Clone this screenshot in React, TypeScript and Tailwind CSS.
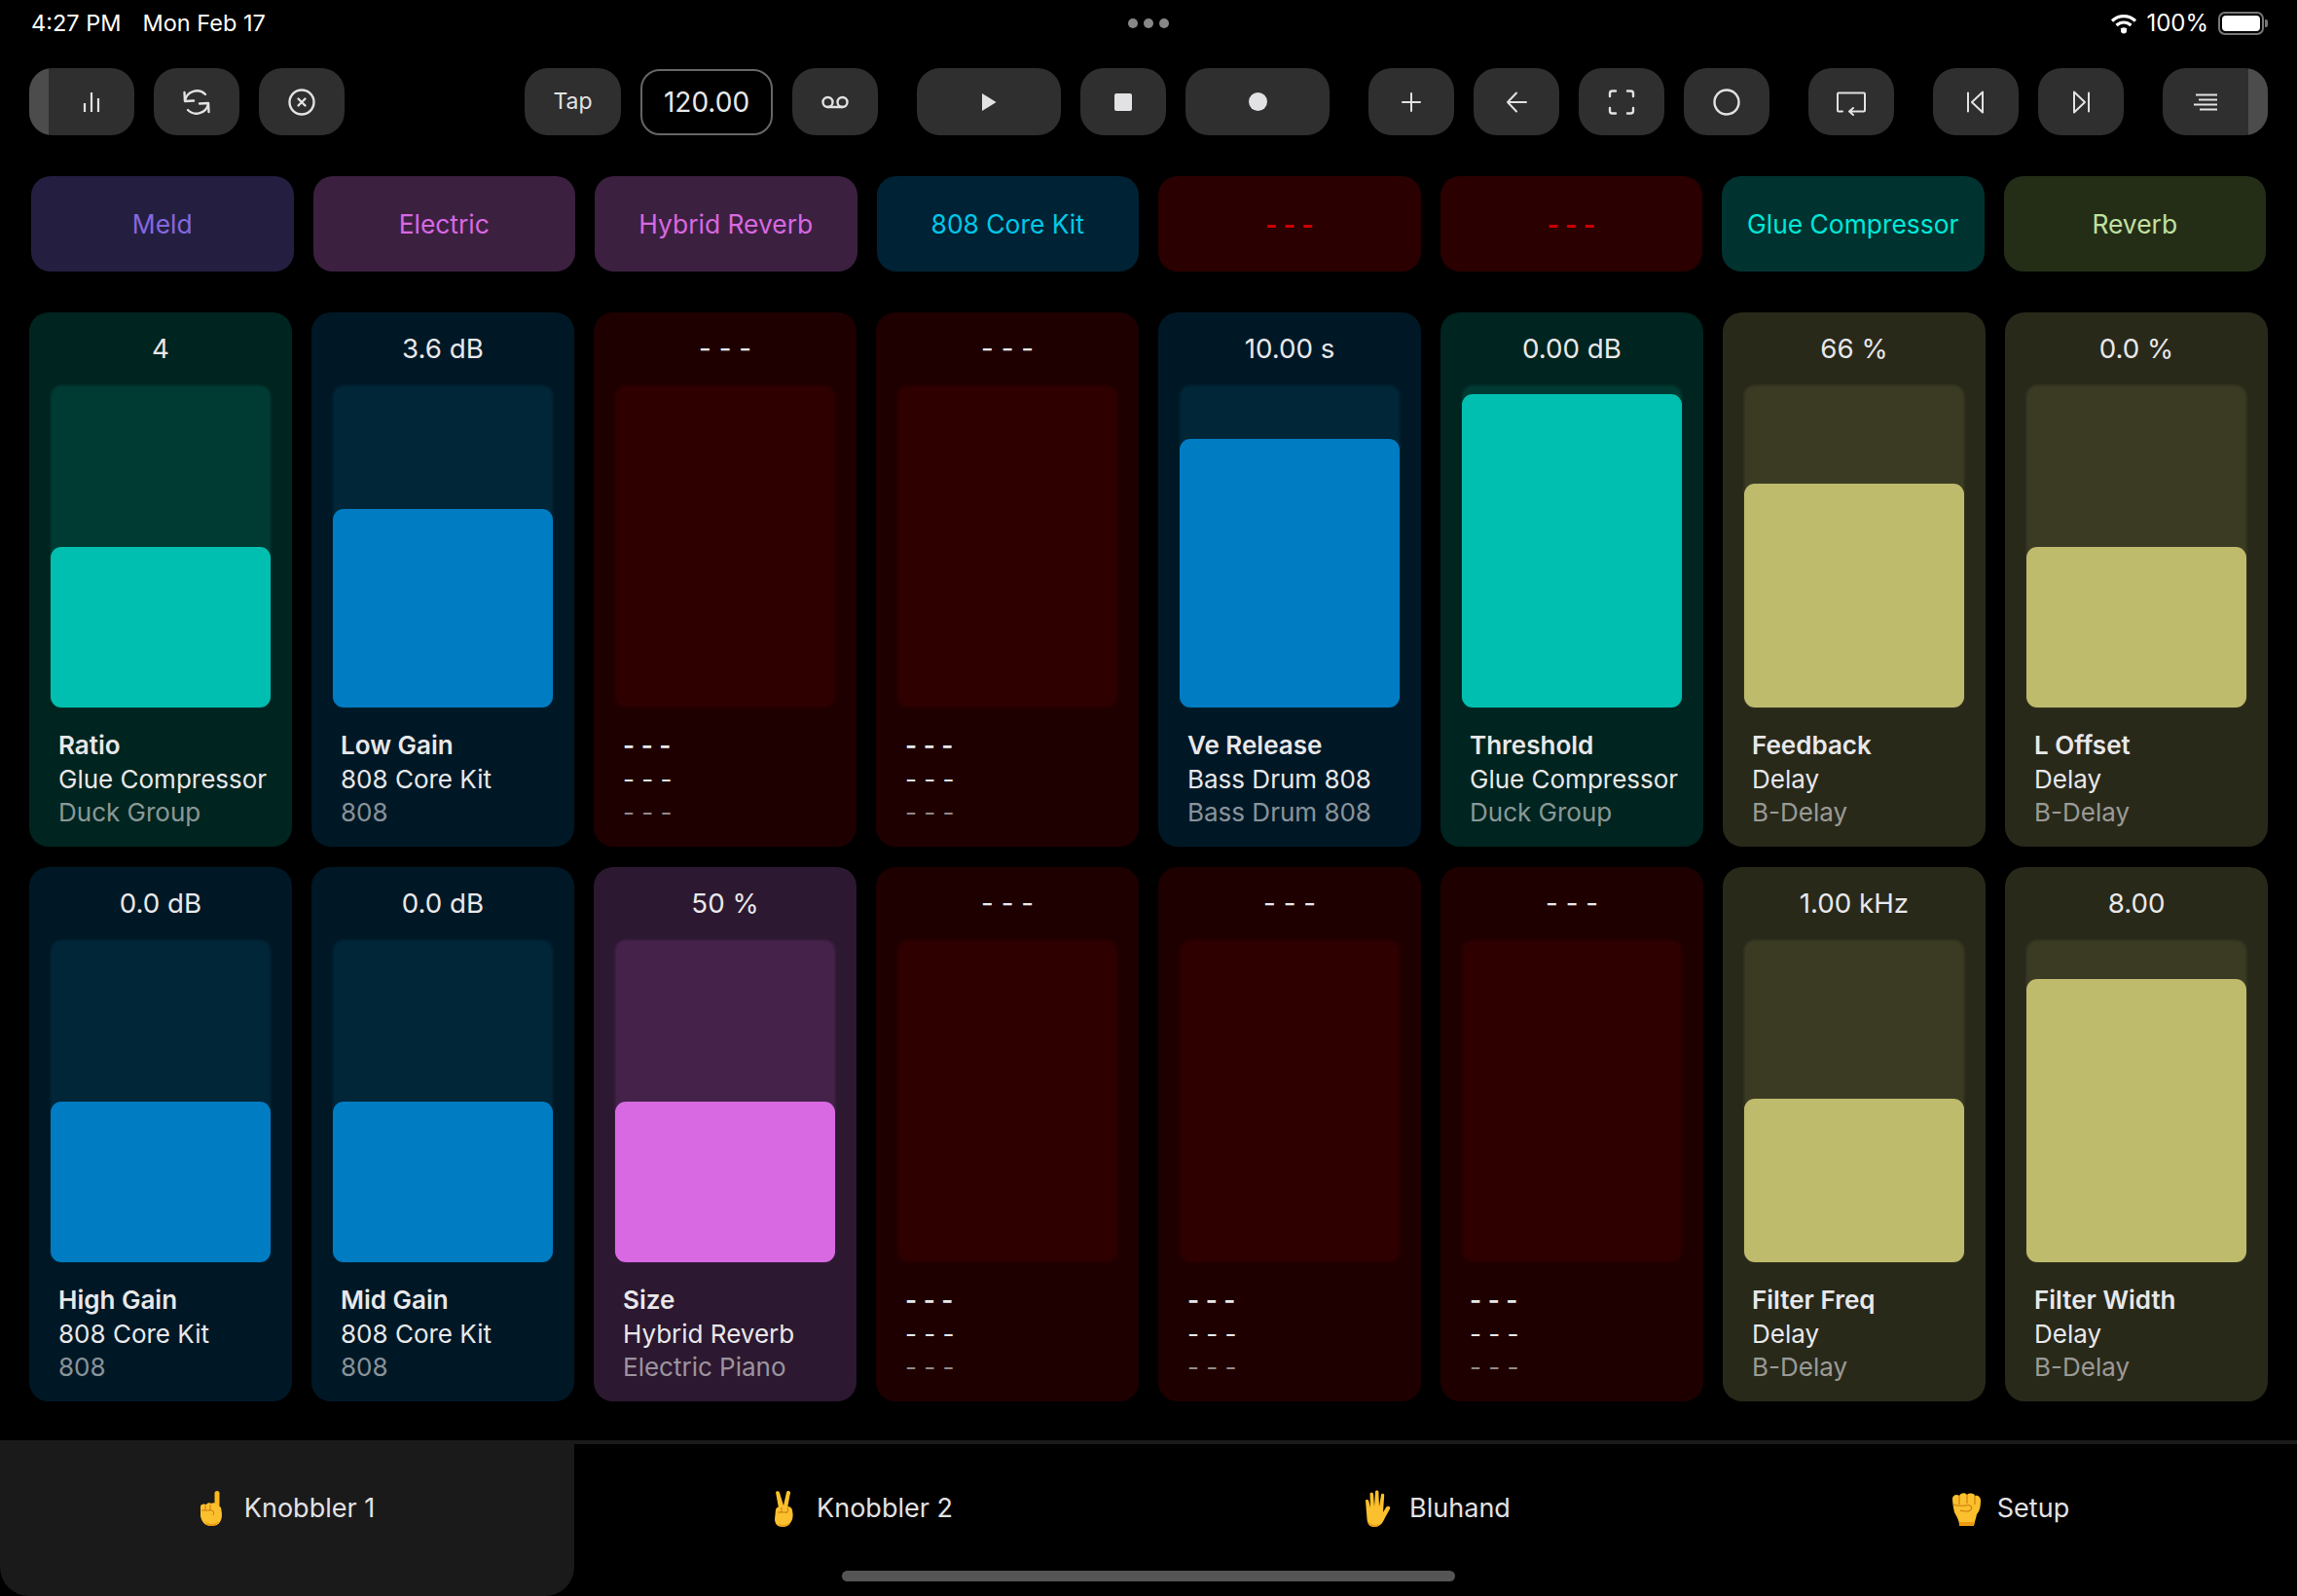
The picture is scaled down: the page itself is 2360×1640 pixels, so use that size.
import React from "react";

const THEMES = {
  green: { card: "bg-[#00241f]", track: "bg-[#003b33] border-[#002f29]", fill: "bg-[#00bfb0]" },
  blue: { card: "bg-[#001826]", track: "bg-[#002638] border-[#001f2f]", fill: "bg-[#007cc2]" },
  red: { card: "bg-[#1f0000]", track: "bg-[#2e0000] border-[#260000]", fill: "" },
  purple: { card: "bg-[#2c1830]", track: "bg-[#44224a] border-[#3a1e40]", fill: "bg-[#d869e2]" },
  yellow: { card: "bg-[#29291a]", track: "bg-[#3b3b24] border-[#323220]", fill: "bg-[#bfbb6d]" },
};

type Theme = keyof typeof THEMES;
type Param = { value: string; name: string; device: string; track: string; theme: Theme; fill: number };

const EMPTY: Param = { value: "- - -", name: "- - -", device: "- - -", track: "- - -", theme: "red", fill: 0 };

const ROW1: Param[] = [
  { value: "4", name: "Ratio", device: "Glue Compressor", track: "Duck Group", theme: "green", fill: 165 },
  { value: "3.6 dB", name: "Low Gain", device: "808 Core Kit", track: "808", theme: "blue", fill: 204 },
  EMPTY,
  EMPTY,
  { value: "10.00 s", name: "Ve Release", device: "Bass Drum 808", track: "Bass Drum 808", theme: "blue", fill: 276 },
  { value: "0.00 dB", name: "Threshold", device: "Glue Compressor", track: "Duck Group", theme: "green", fill: 322 },
  { value: "66 %", name: "Feedback", device: "Delay", track: "B-Delay", theme: "yellow", fill: 230 },
  { value: "0.0 %", name: "L Offset", device: "Delay", track: "B-Delay", theme: "yellow", fill: 165 },
];

const ROW2: Param[] = [
  { value: "0.0 dB", name: "High Gain", device: "808 Core Kit", track: "808", theme: "blue", fill: 165 },
  { value: "0.0 dB", name: "Mid Gain", device: "808 Core Kit", track: "808", theme: "blue", fill: 165 },
  { value: "50 %", name: "Size", device: "Hybrid Reverb", track: "Electric Piano", theme: "purple", fill: 165 },
  EMPTY,
  EMPTY,
  EMPTY,
  { value: "1.00 kHz", name: "Filter Freq", device: "Delay", track: "B-Delay", theme: "yellow", fill: 168 },
  { value: "8.00", name: "Filter Width", device: "Delay", track: "B-Delay", theme: "yellow", fill: 291 },
];

const HEADERS = [
  { label: "Meld", cls: "bg-[#241f40] text-[#8468e0]" },
  { label: "Electric", cls: "bg-[#3c2040] text-[#d868e0]" },
  { label: "Hybrid Reverb", cls: "bg-[#3c2040] text-[#d868e0]" },
  { label: "808 Core Kit", cls: "bg-[#002235] text-[#00c8e8]" },
  { label: "- - -", cls: "bg-[#2b0000] text-[#cc0000] font-bold" },
  { label: "- - -", cls: "bg-[#2b0000] text-[#cc0000] font-bold" },
  { label: "Glue Compressor", cls: "bg-[#003330] text-[#00e8d8]" },
  { label: "Reverb", cls: "bg-[#242e17] text-[#c0e0a0]" },
];

function Ico({ w = 32, h = 32, children }: { w?: number; h?: number; children: React.ReactNode }) {
  return (
    <svg width={w} height={h} viewBox={`${-w / 2} ${-h / 2} ${w} ${h}`} fill="none" stroke="#e2e2e4" strokeWidth={2.4} strokeLinecap="round" strokeLinejoin="round">
      {children}
    </svg>
  );
}

function Btn({ w, strip, children }: { w: string; strip?: "left" | "right"; children?: React.ReactNode }) {
  return (
    <div className={`relative ${w} h-[69px] shrink-0 rounded-[24px] bg-[#2f2f2f] overflow-hidden flex items-center justify-center`}>
      {strip === "left" && <div className="absolute left-0 top-0 bottom-0 w-[20px] bg-[#4c4c4c]" />}
      {strip === "right" && <div className="absolute right-0 top-0 bottom-0 w-[20px] bg-[#4c4c4c]" />}
      {children}
    </div>
  );
}

function IndexEmoji() {
  return (
    <svg width="26" height="36" viewBox="0 0 26 36">
      <rect x="15.500" y="0" width="5" height="22" rx="2.500" fill="#f9b81c" />
      <path d="M1 16c0-2 3-3 5-2l1 0c1-2 4-2 5-1 2-1 4-1 5 1l5 3c1 6 2 10-1 15-2 3-5 4-9 4-7 0-10-5-11-10z" fill="#fbc02d" />
      <path d="M2 20h11M6 15v5M11 14v6M13 20c2 1 2 3 1 5" fill="none" stroke="#c9790f" strokeWidth="1" />
      <path d="M5 31c4 4 11 4 15 0-2 4-5 5-8 5s-6-2-7-5z" fill="#ee9a11" />
    </svg>
  );
}

function PeaceEmoji() {
  return (
    <svg width="30" height="38" viewBox="0 0 30 38">
      <path d="M6 2.500c1-2 3.500-1.500 4 .5L14 16l3-13.500c.5-2 3.500-2 4 0 .2 1-.2 2-.5 3L18 19H9z" fill="#fbc02d" />
      <path d="M6 20c1-3 4-3 6-2l6-1c3 0 5 2 5 4 1 5 1 9-2 13-2 3-5 4-8 4-5 0-8-3-8-8z" fill="#fbc02d" />
      <path d="M8 23h10M12 18v5M18 18c1 2 1 4-1 6" fill="none" stroke="#c9790f" strokeWidth="1" />
      <path d="M8 34c3 3 9 3 13-1-2 3-5 5-8 5-2 0-4-2-5-4z" fill="#ee9a11" />
    </svg>
  );
}

function HandEmoji() {
  return (
    <svg width="34" height="38" viewBox="0 0 34 38">
      <path d="M5 11c0-1.500 3-1.500 3.300.3L10 18 9.500 4c0-1.800 3.300-1.800 3.500 0l1 13L15 2c.2-2 3.300-2 3.400 0L19 17l2-12c.4-1.800 3.300-1.500 3.200.4L23 23l3-5c1.500-2.600 5.500-1 4 1.500l-5 9c-2 5-5 9.500-11 9.500-5 0-7-3-7.500-8z" fill="#fbc02d" />
      <path d="M7 31c2 5 9 7 14 3-2 3-4 4-7 4-4 0-6-3-7-7z" fill="#ee9a11" />
    </svg>
  );
}

function FistEmoji() {
  return (
    <svg width="32" height="36" viewBox="0 0 32 36">
      <path d="M2 8c0-4 5-5 7-3 1-3 6-4 8-1 2-2 7-2 8 1 3-1 6 1 6 5 0 6-1 11-4 14-1 5-2 7-3 11H9c0-5-3-9-5-13-1-5-2-9-2-14z" fill="#fbc02d" />
      <path d="M9 5v9M17 4v9M25 5v9M3 14c7 3 14 0 17 1 3 1 2 6-3 6-2 0-5 0-7-1" fill="none" stroke="#c9790f" strokeWidth="1.100" />
      <path d="M9 32h16l-1 4H9z" fill="#ee9a11" />
    </svg>
  );
}

function ParamCard({ p }: { p: Param }) {
  const t = THEMES[p.theme];
  return (
    <div className={`${t.card} rounded-[20px] h-[549px] flex flex-col`}>
      <div className="h-[75px] flex items-center justify-center text-[#e8e8ea] text-[27.7px]">{p.value}</div>
      <div className={`${t.track} mx-[21px] -mt-[1px] h-[333px] rounded-[12px] border-[2px] flex flex-col justify-end`}>
        {p.fill > 0 && <div className={`${t.fill} -mx-[1px] -mb-[1px] rounded-[11px]`} style={{ height: p.fill }} />}
      </div>
      <div className="mt-[21px] px-[30px] leading-[34.5px] whitespace-nowrap">
        <div className="font-semibold text-[#e8e8ea]">{p.name}</div>
        <div className="text-[#e8e8ea]">{p.device}</div>
        <div className="text-[#e8e8ea]/60">{p.track}</div>
      </div>
    </div>
  );
}

export default function App() {
  return (
    <div className="relative w-[2360px] h-[1640px] bg-black overflow-hidden font-['Inter','Liberation_Sans',sans-serif] text-[26px]">
      {/* status bar */}
      <div className="relative h-[70px] px-[32px] pt-[8px] flex items-start justify-between text-[23.5px] leading-[32px] text-white">
        <div className="flex gap-[22px]">
          <span>4:27 PM</span>
          <span>Mon Feb 17</span>
        </div>
        <div className="absolute left-[1159px] top-[19px] flex gap-[6px]">
          <div className="w-[10px] h-[10px] rounded-full bg-[#888888]" />
          <div className="w-[10px] h-[10px] rounded-full bg-[#888888]" />
          <div className="w-[10px] h-[10px] rounded-full bg-[#888888]" />
        </div>
        <div className="flex items-center gap-[9px] -mr-[2px] text-[24px]">
          <svg width="28" height="21" viewBox="0 0 28 21" fill="none" stroke="white" strokeWidth="3.200">
            <path d="M2 7.500C9 1 19 1 26 7.500" />
            <path d="M6.500 12C11 8 17 8 21.500 12" />
            <circle cx="14" cy="17.500" r="3" fill="white" stroke="none" />
            <path d="M10.500 15.500c2-1.500 5-1.500 7 0l-3.500 4z" fill="white" stroke="none" />
          </svg>
          <span>100%</span>
          <div className="flex items-center gap-[1px] ml-[1px]">
            <div className="w-[47px] h-[24px] rounded-[7px] border-[2px] border-[#777777] p-[2px]">
              <div className="w-full h-full rounded-[4px] bg-white" />
            </div>
            <div className="w-[3px] h-[8px] rounded-r-[2px] bg-[#777777]" />
          </div>
        </div>
      </div>

      {/* toolbar */}
      <div className="px-[30px] flex items-center">
        <div className="flex gap-[20px]">
          <Btn w="w-[108px]" strip="left">
            <div className="pl-[20px] flex">
              <Ico w={24} h={32}>
                <path d="M-7 1v9M0 -10v20M7 -4v14" strokeWidth={2.2} strokeLinecap="butt" />
              </Ico>
            </div>
          </Btn>
          <Btn w="w-[88px]">
            <Ico>
              <path d="M-12 -2A12.500 12.500 0 0 1 9 -8" />
              <path d="M-12.500 -10L-12 -1L-3 -1.500" />
              <path d="M12 2A12.500 12.500 0 0 1 -9 8" />
              <path d="M12.500 10L12 1L3 1.500" />
            </Ico>
          </Btn>
          <Btn w="w-[88px]">
            <Ico>
              <circle cx="0" cy="0" r="12.500" />
              <path d="M-3.500 -3.500L3.500 3.500M3.500 -3.500L-3.500 3.500" />
            </Ico>
          </Btn>
        </div>

        <div className="ml-auto flex gap-[40px]">
          <div className="flex gap-[20px]">
            <Btn w="w-[99px]">
              <span className="text-[#e2e2e4] text-[23px]">Tap</span>
            </Btn>
            <div className="w-[136px] h-[68px] my-auto rounded-[20px] border-[2px] border-[#666666] flex items-center justify-center text-[#e8e8ea] text-[28px]">
              120.00
            </div>
            <Btn w="w-[88px]">
              <Ico>
                <circle cx="-7.500" cy="0" r="5" />
                <circle cx="7.500" cy="0" r="5" />
                <path d="M-7.500 5H7.500" />
              </Ico>
            </Btn>
          </div>
          <div className="flex gap-[20px]">
            <Btn w="w-[148px]">
              <Ico>
                <path d="M-7 -9L7.500 0L-7 9Z" fill="#e2e2e4" stroke="none" />
              </Ico>
            </Btn>
            <Btn w="w-[88px]">
              <div className="w-[18px] h-[18px] rounded-[2px] bg-[#e2e2e4]" />
            </Btn>
            <Btn w="w-[148px]">
              <div className="w-[19px] h-[19px] rounded-full bg-[#e2e2e4]" />
            </Btn>
          </div>
          <div className="flex gap-[20px]">
            <Btn w="w-[88px]">
              <Ico>
                <path d="M-9 0H9M0 -9V9" strokeWidth={2} />
              </Ico>
            </Btn>
            <Btn w="w-[88px]">
              <Ico>
                <path d="M-9 0H10M0 -9.500L-9 0L0 9.500" strokeWidth={2} />
              </Ico>
            </Btn>
            <Btn w="w-[88px]">
              <Ico>
                <path d="M-12 -6V-9A2.500 2.500 0 0 1 -9.500 -11.500H-6M6 -11.500H9.500A2.500 2.500 0 0 1 12 -9V-6M12 6V9A2.500 2.500 0 0 1 9.500 11.500H6M-6 11.500H-9.500A2.500 2.500 0 0 1 -12 9V6" />
              </Ico>
            </Btn>
            <Btn w="w-[88px]">
              <Ico>
                <circle cx="0" cy="0" r="12.500" />
              </Ico>
            </Btn>
          </div>
          <Btn w="w-[88px]">
            <Ico>
              <path d="M-9 9.500H-13A1 1 0 0 1 -14 8.500V-8.500A1 1 0 0 1 -13 -9.500H13A1 1 0 0 1 14 -8.500V8.500A1 1 0 0 1 13 9.500H-2M2 6L-2 9.500L2 13" strokeWidth={2} />
            </Ico>
          </Btn>
          <div className="flex gap-[20px]">
            <Btn w="w-[88px]">
              <Ico>
                <path d="M-8 -9.500V9.500M7 -10.500L-4 0L7 10.500Z" strokeWidth={2} />
              </Ico>
            </Btn>
            <Btn w="w-[88px]">
              <Ico>
                <path d="M8 -9.500V9.500M-7 -10.500L4 0L-7 10.500Z" strokeWidth={2} />
              </Ico>
            </Btn>
          </div>
          <Btn w="w-[108px]" strip="right">
            <div className="pr-[20px] flex">
              <Ico w={28}>
                <path d="M-10 -7.500H12M-7 -2.500H12M-12 2.500H12M-6 7.500H12" strokeWidth={2} strokeLinecap="butt" />
              </Ico>
            </div>
          </Btn>
        </div>
      </div>

      {/* device headers */}
      <div className="mt-[42px] px-[32px] grid grid-cols-8 gap-x-[20px]">
        {HEADERS.map((h, i) => (
          <div key={i} className={`${h.cls} h-[98px] pt-[1px] rounded-[20px] flex items-center justify-center whitespace-nowrap text-[26.4px]`}>
            {h.label}
          </div>
        ))}
      </div>

      {/* params */}
      <div className="mt-[42px] px-[30px] grid grid-cols-8 gap-x-[20px] gap-y-[21px]">
        {ROW1.map((p, i) => (
          <ParamCard key={i} p={p} />
        ))}
        {ROW2.map((p, i) => (
          <ParamCard key={i} p={p} />
        ))}
      </div>

      {/* tabs */}
      <div className="mt-[40px] h-[160px] grid grid-cols-4 text-[#e2e2e4] text-[27px]">
        <div className="bg-[#1a1a1a] rounded-b-[30px] pb-[20px] flex items-center justify-center gap-[20px]">
          <IndexEmoji /> Knobbler 1
        </div>
        <div className="border-t-[4px] border-[#1a1a1a] pb-[24px] flex items-center justify-center gap-[18px]">
          <PeaceEmoji /> Knobbler 2
        </div>
        <div className="border-t-[4px] border-[#1a1a1a] pb-[24px] flex items-center justify-center gap-[16px]">
          <HandEmoji /> Bluhand
        </div>
        <div className="border-t-[4px] border-[#1a1a1a] pb-[24px] flex items-center justify-center gap-[16px]">
          <FistEmoji /> Setup
        </div>
      </div>

      <div className="absolute left-[865px] top-[1614px] w-[630px] h-[11px] rounded-full bg-[#555555]" />
    </div>
  );
}
